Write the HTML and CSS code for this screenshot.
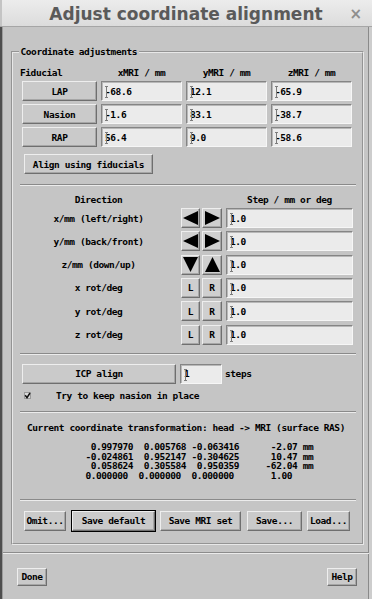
FILE: index.html
```html
<!DOCTYPE html>
<html>
<head>
<meta charset="utf-8">
<title>Adjust coordinate alignment</title>
<link rel="stylesheet" href="styles.css">
</head>
<body>
<div class="window">
  <div class="titlebar">
    <span></span>
    <span class="title">Adjust coordinate alignment</span>
    <span class="close">×</span>
  </div>
  <div class="main">
    <fieldset class="frame">
      <legend>Coordinate adjustments</legend>

      <div class="fid-hdr">
        <span class="fh-first">Fiducial</span>
        <span>xMRI / mm</span>
        <span>yMRI / mm</span>
        <span>zMRI / mm</span>
      </div>
      <div class="fid-grid">
        <div class="btn">LAP</div><div class="entry">-68.6</div><div class="entry">12.1</div><div class="entry">-65.9</div>
        <div class="btn">Nasion</div><div class="entry">-1.6</div><div class="entry">83.1</div><div class="entry">-38.7</div>
        <div class="btn">RAP</div><div class="entry">56.4</div><div class="entry">9.0</div><div class="entry">-58.6</div>
      </div>
      <div class="btn align-btn">Align using fiducials</div>

      <div class="sep sep1"></div>

      <div class="dir-hdr">
        <span class="dlabel">Direction</span>
        <span class="dstep">Step / mm or deg</span>
      </div>
      <div class="dir-rows">
        <div class="dir-row">
          <span class="dlabel">x/mm (left/right)</span>
          <div class="btn sq sq1"><svg width="15" height="14" viewBox="0 0 15 14"><polygon points="0,7 15,0 15,14" fill="#000"/></svg></div>
          <div class="btn sq sq2"><svg width="15" height="14" viewBox="0 0 15 14"><polygon points="0,0 15,7 0,14" fill="#000"/></svg></div>
          <div class="entry step">1.0</div>
        </div>
        <div class="dir-row">
          <span class="dlabel">y/mm (back/front)</span>
          <div class="btn sq sq1"><svg width="15" height="14" viewBox="0 0 15 14"><polygon points="0,7 15,0 15,14" fill="#000"/></svg></div>
          <div class="btn sq sq2"><svg width="15" height="14" viewBox="0 0 15 14"><polygon points="0,0 15,7 0,14" fill="#000"/></svg></div>
          <div class="entry step">1.0</div>
        </div>
        <div class="dir-row">
          <span class="dlabel">z/mm (down/up)</span>
          <div class="btn sq sq1"><svg width="15" height="15" viewBox="0 0 15 15"><polygon points="0,0 15,0 7.5,15" fill="#000"/></svg></div>
          <div class="btn sq sq2"><svg width="15" height="15" viewBox="0 0 15 15"><polygon points="7.5,0 15,15 0,15" fill="#000"/></svg></div>
          <div class="entry step">1.0</div>
        </div>
        <div class="dir-row">
          <span class="dlabel">x rot/deg</span>
          <div class="btn sq sq1">L</div>
          <div class="btn sq sq2">R</div>
          <div class="entry step">1.0</div>
        </div>
        <div class="dir-row">
          <span class="dlabel">y rot/deg</span>
          <div class="btn sq sq1">L</div>
          <div class="btn sq sq2">R</div>
          <div class="entry step">1.0</div>
        </div>
        <div class="dir-row">
          <span class="dlabel">z rot/deg</span>
          <div class="btn sq sq1">L</div>
          <div class="btn sq sq2">R</div>
          <div class="entry step">1.0</div>
        </div>
      </div>

      <div class="sep sep2"></div>

      <div class="icp-row">
        <div class="btn icp-btn">ICP align</div>
        <div class="entry icp-entry">1</div>
        <span class="steps">steps</span>
      </div>
      <div class="chk-row">
        <svg class="chk" width="7" height="7" viewBox="0 0 7 7"><rect x="0.5" y="0.5" width="6" height="6" fill="#dcdcdc" stroke="#9a9a9a"/><path d="M1.2 3.2 L3 5.6 L6 1" stroke="#111" stroke-width="1.5" fill="none"/></svg>
        <span class="chk-label">Try to keep nasion in place</span>
      </div>

      <div class="sep sep3"></div>

      <div class="caption">Current coordinate transformation: head -&gt; MRI (surface RAS)</div>
      <div class="matrix">
        <div class="mline"> 0.997970  0.005768 -0.063416      -2.07 mm</div>
        <div class="mline">-0.024861  0.952147 -0.304625      10.47 mm</div>
        <div class="mline"> 0.058624  0.305584  0.950359     -62.04 mm</div>
        <div class="mline">0.000000  0.000000  0.000000       1.00</div>
      </div>

      <div class="sep sep4"></div>

      <div class="btn-row">
        <div class="btn b-omit">Omit...</div>
        <div class="btn b-savedef focus">Save default</div>
        <div class="btn b-savemri">Save MRI set</div>
        <div class="btn b-save">Save...</div>
        <div class="btn b-load">Load...</div>
      </div>
    </fieldset>

    <div class="winsep"></div>

    <div class="footer">
      <div class="btn small">Done</div>
      <div class="btn small">Help</div>
    </div>
  </div>
</div>
</body>
</html>
```

FILE: styles.css
```css
* {
  box-sizing: border-box;
}

html, body {
  margin: 0;
  padding: 0;
}

body {
  width: 372px;
  height: 599px;
  overflow: hidden;
  background: #c5c5c5;
  color: #000;
  font-family: "DejaVu Sans Mono", "Liberation Mono", monospace;
  font-weight: bold;
  font-size: 9.5px;
  letter-spacing: -0.42px;
  line-height: 11px;
}

.window {
  width: 372px;
  height: 599px;
  display: flex;
  flex-direction: column;
}

/* ---------- title bar ---------- */
.titlebar {
  height: 27px;
  padding-top: 2px;
  display: grid;
  grid-template-columns: 1fr auto 1fr;
  align-items: center;
  background: linear-gradient(#ececec, #dcdcdc);
  border-bottom: 1px solid #a6a6a6;
  box-shadow: inset 2px 0 0 #c4c4c4;
  font-family: "DejaVu Sans", sans-serif;
  letter-spacing: 0;
  line-height: normal;
}

.title {
  font-size: 17px;
  font-weight: bold;
  color: #5a5a5a;
}

.close {
  justify-self: end;
  margin-right: 10px;
  font-size: 15px;
  font-weight: bold;
  color: #8e8e8e;
}

/* ---------- main body ---------- */
.main {
  flex: 1;
  display: flex;
  flex-direction: column;
  border-left: 2px solid #4e4e4e;
  padding-left: 1px;
  border-right: 3px solid #cdcdcd;
  box-shadow: inset 1px 0 0 #9c9c9c, inset -1px 0 0 #8a8a8a;
}

.frame {
  margin: 19px 5px 0 8px;
  padding: 0;
  min-width: 0;
  border: 2px groove #e8e8e8;
  display: flex;
  flex-direction: column;
}

.frame legend {
  margin-left: 6px;
  padding: 0 1.5px;
  line-height: 12px;
}

/* ---------- common widgets ---------- */
.btn {
  height: 20px;
  display: flex;
  align-items: center;
  justify-content: center;
  background: #cacaca;
  border: 1px solid;
  border-color: #eeeeee #6f6f6f #6f6f6f #eeeeee;
  box-shadow: inset -1px -1px 0 #a6a6a6;
  white-space: nowrap;
}

.entry {
  position: relative;
  height: 20px;
  display: flex;
  align-items: center;
  padding-left: 3px;
  background: #ebebeb;
  border: 1px solid;
  border-color: #858585 #f6f6f6 #f6f6f6 #858585;
  box-shadow: inset 1px 1px 0 #b8b8b8;
  white-space: pre;
}

.entry::before {
  content: "";
  position: absolute;
  left: 3px;
  top: 4px;
  width: 3px;
  height: 10px;
  border-top: 1px solid #7c7c7c;
  border-bottom: 1px solid #7c7c7c;
  background: linear-gradient(#7c7c7c, #7c7c7c) 1px 0 / 1px 100% no-repeat;
}

.sep {
  height: 2px;
  margin-left: 7px;
  margin-right: 6px;
  border-top: 1px solid #8a8a8a;
  border-bottom: 1px solid #ececec;
}

/* ---------- fiducials ---------- */
.fid-hdr {
  margin-top: 9px;
  padding-left: 9px;
  display: grid;
  grid-template-columns: 75px 81px 81px 81px;
  column-gap: 4px;
  text-align: center;
  white-space: nowrap;
}

.fid-hdr .fh-first {
  text-align: left;
  margin-left: -2px;
}

.fid-grid {
  margin-top: 3px;
  padding-left: 9px;
  display: grid;
  grid-template-columns: 75px 81px 81px 81px;
  grid-auto-rows: 20px;
  column-gap: 4px;
  row-gap: 3px;
}

.align-btn {
  margin-top: 7px;
  margin-left: 11px;
  width: 129px;
}

.sep1 {
  margin-top: 10px;
}

/* ---------- direction ---------- */
.dir-hdr {
  margin-top: 8px;
  padding-left: 7px;
  display: flex;
  white-space: nowrap;
}

.dlabel {
  width: 157px;
  text-align: center;
  white-space: nowrap;
}

.dstep {
  width: 127px;
  margin-left: 49px;
  text-align: center;
}

.dir-rows {
  margin-top: 3px;
  display: flex;
  flex-direction: column;
  row-gap: 3.33px;
}

.dir-row {
  height: 20px;
  padding-left: 7px;
  display: flex;
  align-items: center;
}

.sq {
  height: 20px;
  background: #cfcfcf;
}

.sq1 {
  width: 19px;
  margin-left: 4px;
}

.sq2 {
  width: 20px;
  margin-left: 2px;
}

.step {
  width: 127px;
  margin-left: 4px;
}

.sep2 {
  margin-top: 8.33px;
}

/* ---------- ICP ---------- */
.icp-row {
  margin-top: 9px;
  padding-left: 9px;
  display: flex;
  align-items: center;
}

.icp-btn {
  width: 154px;
}

.icp-entry {
  width: 42px;
  margin-left: 4px;
}

.steps {
  margin-left: 3px;
}

.chk-row {
  margin-top: 6px;
  padding-left: 11px;
  height: 11px;
  display: flex;
  align-items: center;
}

.chk {
  display: block;
  flex: none;
}

.chk-label {
  margin-left: 25px;
}

.sep3 {
  margin-top: 10px;
}

/* ---------- transform ---------- */
.caption {
  margin-top: 9px;
  padding-right: 3px;
  text-align: center;
  white-space: nowrap;
}

.matrix {
  margin-top: 9px;
  margin-left: 72.4px;
  line-height: 9.67px;
}

.mline {
  height: 9.67px;
  white-space: pre;
}

.sep4 {
  margin-top: 18.33px;
}

/* ---------- bottom buttons ---------- */
.btn-row {
  margin-top: 10px;
  margin-bottom: 12px;
  padding-left: 11px;
  display: flex;
}

.b-omit {
  width: 42px;
}

.b-savedef {
  width: 83px;
  margin-left: 6px;
}

.b-savemri {
  width: 81px;
  margin-left: 5px;
}

.b-save {
  width: 55px;
  margin-left: 6px;
}

.b-load {
  width: 43px;
  margin-left: 5px;
}

.focus {
  outline: 1px solid #000;
  outline-offset: 0;
}

/* ---------- footer ---------- */
.winsep {
  height: 2px;
  margin-top: 7px;
  border-top: 1px solid #8c8c8c;
  border-bottom: 1px solid #ebebeb;
}

.footer {
  margin-top: 14px;
  padding: 0 12px 0 14px;
  display: flex;
  justify-content: space-between;
}

.small {
  width: 30px;
  height: 18px;
}
```
